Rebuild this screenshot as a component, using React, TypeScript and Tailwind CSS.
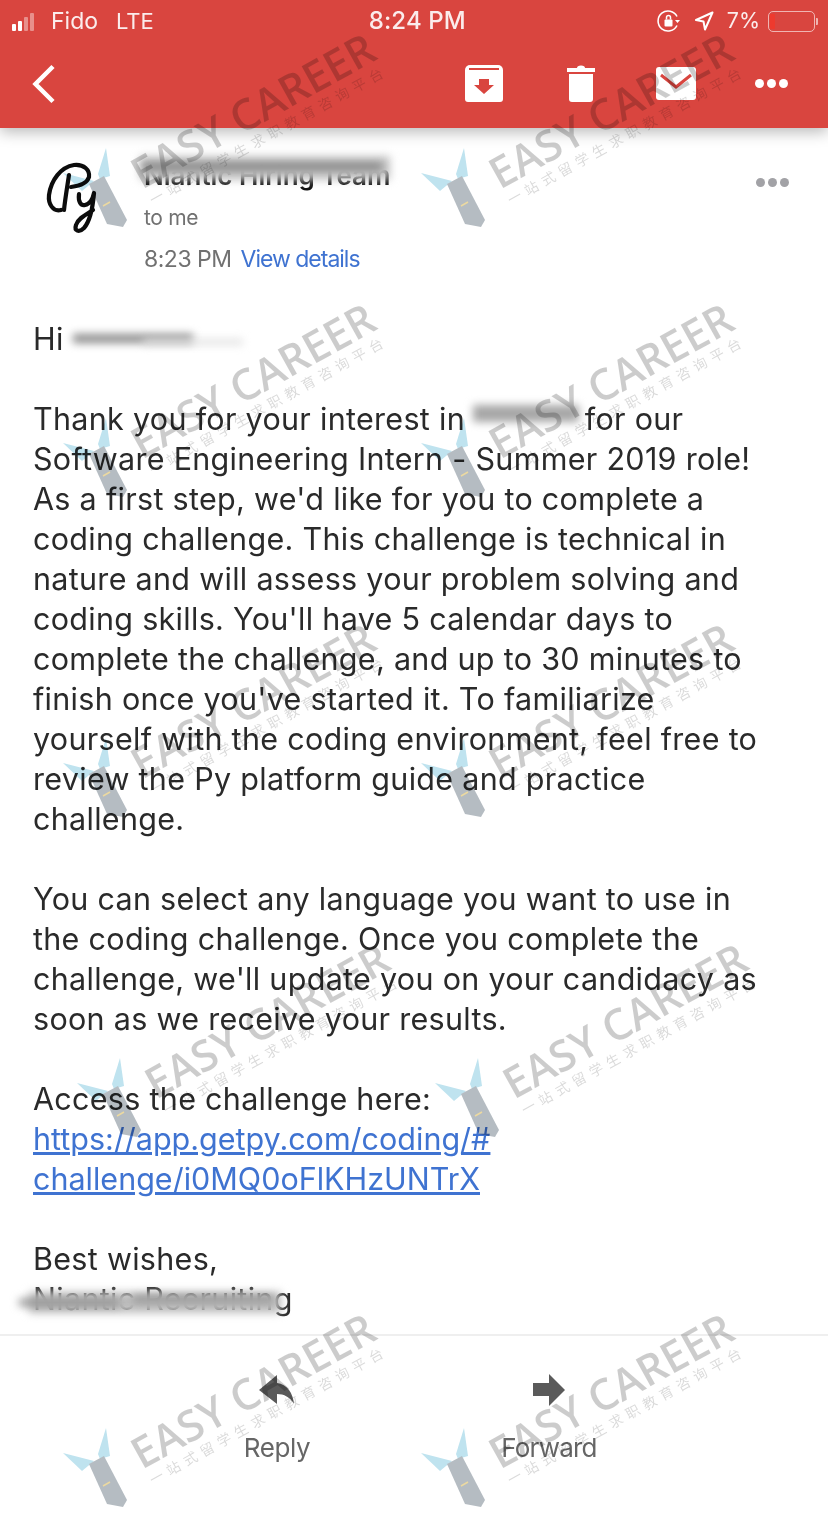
import React from 'react';

const uiFont = "font-['Inter','Noto_Sans',sans-serif]";

const marks = [
  { x: 62, y: 148 },
  { x: 420, y: 148 },
  { x: 62, y: 418 },
  { x: 420, y: 418 },
  { x: 62, y: 738 },
  { x: 420, y: 738 },
  { x: 76, y: 1058 },
  { x: 434, y: 1058 },
  { x: 62, y: 1428 },
  { x: 420, y: 1428 },
];

function Watermark({ x, y }: { x: number; y: number }) {
  return (
    <div className="absolute w-0 h-0 pointer-events-none" style={{ left: x, top: y }}>
      <svg width="68" height="80" viewBox="0 0 68 80" className="absolute left-0 top-0 mix-blend-multiply">
        <polygon points="1,25 32,33 20,43" fill="#bfe3ef" />
        <polygon points="44,0 48,28 38,31 36,26" fill="#bfe3ef" />
        <polygon points="27,36 42,28 65,72 61,79 45,76" fill="#b5bcc2" />
        <line x1="41" y1="58" x2="48" y2="54" stroke="#ecd9a0" strokeWidth="1.5" />
      </svg>
      <div className="absolute left-[72px] top-[1px] origin-left -rotate-[29deg] whitespace-nowrap font-['Open_Sans',sans-serif] font-semibold text-[43px] leading-[54px] text-black/20">
        EASY CAREER
      </div>
      <div className="absolute left-[88px] top-[41px] origin-left -rotate-[29deg] whitespace-nowrap font-['Noto_Sans_CJK_SC',sans-serif] text-[14px] leading-[22px] tracking-[5.3px] text-black/15">
        一站式留学生求职教育咨询平台
      </div>
    </div>
  );
}

function Smudge({ className }: { className: string }) {
  return <span className={`absolute block bg-[#8d8d8d] blur-[4px] ${className}`} />;
}

function StatusBar() {
  return (
    <div className={`flex items-center h-[42px] pl-[12px] text-white/90 whitespace-nowrap ${uiFont}`}>
      <div className="flex shrink-0 items-end gap-[2px] h-[20px] w-[39px]">
        <span className="w-[4px] h-[7px] rounded-[1px] bg-white" />
        <span className="w-[4px] h-[10px] rounded-[1px] bg-white" />
        <span className="w-[4px] h-[14px] rounded-[1px] bg-white/40" />
        <span className="w-[4px] h-[18px] rounded-[1px] bg-white/40" />
      </div>
      <span className="text-[23px] leading-none">Fido</span>
      <span className="ml-[18px] text-[22px] leading-none">LTE</span>
      <span className="ml-[215px] text-[24px] leading-none font-medium tracking-[0.1px]">8:24 PM</span>
      <svg width="24" height="24" viewBox="0 0 24 24" fill="none" className="ml-[191px] shrink-0">
        <path d="M20 7.5A10 10 0 1 0 20 16.5" stroke="white" strokeWidth="1.6" />
        <path d="M23 11l-2.5 3-2.5-3z" fill="white" />
        <rect x="7.5" y="10.5" width="8" height="7" rx="1" fill="white" />
        <path d="M9.5 10.5V8.5a2 2 0 0 1 4 0v2" stroke="white" strokeWidth="1.5" />
      </svg>
      <svg width="20" height="20" viewBox="0 0 20 20" fill="none" className="ml-[13px] shrink-0">
        <path d="M18.5 1.5L2 9l7.5 1.5L11 18.5z" stroke="white" strokeWidth="2" strokeLinejoin="round" />
      </svg>
      <span className="ml-[13px] text-[21.5px] leading-none">7%</span>
      <div className="ml-[8px] flex shrink-0 items-center">
        <div className="w-[47px] h-[21px] rounded-[5px] border border-white/60 py-[2px] pl-[1px]">
          <div className="w-[5px] h-full rounded-[1px] bg-[#ee3a2e]" />
        </div>
        <span className="ml-[1px] w-[2px] h-[7px] rounded-r-[1px] bg-white/60" />
      </div>
    </div>
  );
}

function ActionBar() {
  return (
    <div className="relative flex items-center h-[86px] pl-[32px]">
      <svg width="24" height="40" viewBox="0 0 24 40" fill="none" className="mb-[3px]">
        <path d="M21 2.5L3.5 20 21 37.5" stroke="white" strokeWidth="4.5" />
      </svg>
      <svg width="38" height="37" viewBox="0 0 38 37" className="ml-[409px] mb-[3px]">
        <path d="M5 0h28a5 5 0 0 1 5 5v29a3 3 0 0 1-3 3H3a3 3 0 0 1-3-3V5a5 5 0 0 1 5-5z" fill="white" />
        <rect x="4" y="3" width="30" height="2" fill="#d9453f" />
        <path d="M14 14h10v6h5L19 29 9 20h5z" fill="#d9453f" />
      </svg>
      <svg width="28" height="37" viewBox="0 0 28 37" className="ml-[64px] mb-[3px]">
        <path d="M10 3a4 2.5 0 0 1 8 0h10v4H0V3z" fill="white" />
        <path d="M2 9h24v25a3 3 0 0 1-3 3H5a3 3 0 0 1-3-3z" fill="white" />
      </svg>
      <svg width="40" height="33" viewBox="0 0 40 33" className="ml-[61px] mb-[3px]">
        <rect width="40" height="33" rx="3" fill="white" />
        <path d="M5 8l15 12L35 8" fill="none" stroke="#d9453f" strokeWidth="3" />
      </svg>
      <div className="ml-[59px] mb-[3px] flex gap-[3px]">
        <span className="w-[9px] h-[9px] rounded-full bg-white" />
        <span className="w-[9px] h-[9px] rounded-full bg-white" />
        <span className="w-[9px] h-[9px] rounded-full bg-white" />
      </div>
    </div>
  );
}

function SenderRow() {
  return (
    <div className="relative flex h-[191px] pl-[44px] pt-[30px]">
      <svg width="58" height="80" viewBox="15 10 58 80" fill="none" stroke="#0c0c0c" strokeWidth="4.2" strokeLinecap="round" strokeLinejoin="round" className="mt-[2px] shrink-0">
        <path d="M32 60C24 62 19 54 20 45 22 30 32 17 45 15 55 14 61 20 60 27 58 34 50 36 42 37" />
        <path d="M40 25C38 38 36 50 35 60" />
        <path d="M50 44C49 52 52 56 56 55 61 54 64 48 65 43 64 55 62 70 55 78 50 83 45 81 47 75 49 68 58 64 64 60" />
      </svg>
      <div className={`ml-[42px] ${uiFont}`}>
        <div className="relative h-[34px] w-[245px]">
          <span className="absolute left-0 top-[1px] whitespace-nowrap font-semibold text-[26px] leading-[34px] text-[#111]">Niantic Hiring Team</span>
          <Smudge className="left-[-4px] top-[-2px] w-[250px] h-[24px] !bg-[#c4c4c4] blur-[2px]" />
          <Smudge className="left-[-2px] top-[6px] w-[240px] h-[5px] !bg-[#666666] blur-[3px]" />
        </div>
        <div className="mt-[10px] text-[21px] leading-[32px] text-[#717171] tracking-[-0.3px]">to me</div>
        <div className="mt-[9px] text-[23px] leading-[32px] text-[#717171] tracking-[-0.5px] whitespace-nowrap">
          8:23 PM<span className="ml-[9px] text-[#3f73d1] tracking-[-1px]">View details</span>
        </div>
      </div>
      <div className="absolute right-[39px] top-[50px] flex gap-[3px]">
        <span className="w-[9px] h-[9px] rounded-full bg-[#a2a2a6]" />
        <span className="w-[9px] h-[9px] rounded-full bg-[#a2a2a6]" />
        <span className="w-[9px] h-[9px] rounded-full bg-[#a2a2a6]" />
      </div>
    </div>
  );
}

function MessageBody() {
  return (
    <div className={`relative flex-1 overflow-hidden pl-[33px] text-[30.5px] leading-[40px] text-[#2a2a2a] whitespace-nowrap tracking-[0.3px] ${uiFont}`}>
      <p className="relative">
        Hi
        <Smudge className="left-[40px] top-[15px] w-[120px] h-[9px] !bg-[#8a8a8a] blur-[3px]" />
        <Smudge className="left-[110px] top-[20px] w-[100px] h-[6px] !bg-[#e2e2e2]" />
      </p>
      <p className="relative mt-[40px]">
        Thank you for your interest in <span className="inline-block w-[102px]" /> for our
        <Smudge className="left-[440px] top-[6px] w-[106px] h-[17px] !bg-[#a6a6a6] blur-[3px]" />
        <br />
        Software Engineering Intern - Summer 2019 role!
        <br />
        As a first step, we'd like for you to complete a
        <br />
        coding challenge. This challenge is technical in
        <br />
        nature and will assess your problem solving and
        <br />
        coding skills. You'll have 5 calendar days to
        <br />
        complete the challenge, and up to 30 minutes to
        <br />
        finish once you've started it. To familiarize
        <br />
        yourself with the coding environment, feel free to
        <br />
        review the Py platform guide and practice
        <br />
        challenge.
      </p>
      <p className="mt-[40px]">
        You can select any language you want to use in
        <br />
        the coding challenge. Once you complete the
        <br />
        challenge, we'll update you on your candidacy as
        <br />
        soon as we receive your results.
      </p>
      <p className="mt-[40px]">
        Access the challenge here:
        <br />
        <a href="#" className="text-[#3f73d1] underline tracking-[0px]">https://app.getpy.com/coding/#</a>
        <br />
        <a href="#" className="text-[#3f73d1] underline tracking-[0px]">challenge/i0MQ0oFlKHzUNTrX</a>
      </p>
      <p className="relative mt-[40px]">
        Best wishes,
        <br />
        Niantic Recruiting
        <Smudge className="left-[-4px] top-[53px] w-[252px] h-[21px] !bg-[#bdbdbd] blur-[2px]" />
        <Smudge className="left-[-14px] top-[60px] w-[100px] h-[7px] !bg-[#8f8f8f] blur-[3px]" />
        <Smudge className="left-[100px] top-[57px] w-[140px] h-[6px] !bg-[#8f8f8f] blur-[3px]" />
      </p>
    </div>
  );
}

function Footer() {
  return (
    <div className={`flex h-[194px] pl-[141px] pt-[38px] border-t-2 border-[#efefef] text-[26px] leading-[32px] text-[#666666] tracking-[-0.4px] ${uiFont}`}>
      <div className="w-[272px] flex flex-col items-center">
        <svg width="36" height="32" viewBox="0 0 36 32" className="block">
          <path d="M18 1L0 16l18 14V20c7 0 13 3 17 10C34 19 28 10 18 9z" fill="#5a5a5a" />
        </svg>
        <span className="mt-[26px]">Reply</span>
      </div>
      <div className="w-[272px] flex flex-col items-center">
        <svg width="32" height="32" viewBox="0 0 32 32" className="block">
          <path d="M0 9h16V0l16 16-16 16V22H0z" fill="#5a5a5a" />
        </svg>
        <span className="mt-[26px] tracking-[-0.8px]">Forward</span>
      </div>
    </div>
  );
}

export default function App() {
  return (
    <div className="relative flex flex-col w-[828px] h-[1528px] overflow-hidden bg-white">
      <div className="relative bg-[#d9453f] shadow-[0_4px_14px_rgba(0,0,0,0.28)]">
        <StatusBar />
        <ActionBar />
      </div>
      <SenderRow />
      <MessageBody />
      <Footer />
      {/* no z-index here, the ties have to multiply onto the page below */}
      <div className="absolute inset-0 pointer-events-none">
        {marks.map(m => (
          <Watermark key={`${m.x}-${m.y}`} x={m.x} y={m.y} />
        ))}
      </div>
    </div>
  );
}
